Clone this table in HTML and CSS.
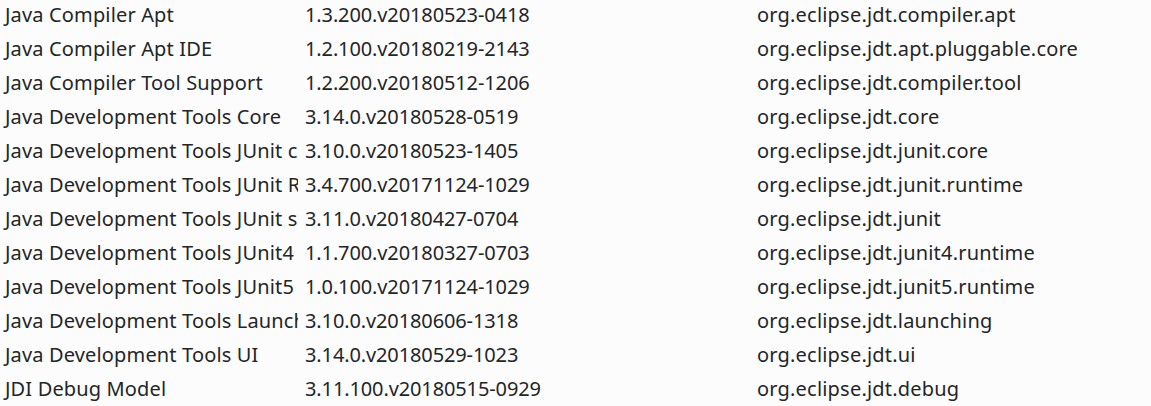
FILE: index.html
```html
<!DOCTYPE html>
<html>
<head>
<meta charset="utf-8">
<link rel="stylesheet" href="styles.css">
</head>
<body>
<div class="list">
  <div class="row"><div class="c name">Java Compiler Apt</div><div class="c ver">1.3.200.v20180523-0418</div><div class="c id">org.eclipse.jdt.compiler.apt</div></div>
  <div class="row"><div class="c name">Java Compiler Apt IDE</div><div class="c ver">1.2.100.v20180219-2143</div><div class="c id">org.eclipse.jdt.apt.pluggable.core</div></div>
  <div class="row"><div class="c name">Java Compiler Tool Support</div><div class="c ver">1.2.200.v20180512-1206</div><div class="c id">org.eclipse.jdt.compiler.tool</div></div>
  <div class="row"><div class="c name">Java Development Tools Core</div><div class="c ver">3.14.0.v20180528-0519</div><div class="c id">org.eclipse.jdt.core</div></div>
  <div class="row"><div class="c name">Java Development Tools JUnit core</div><div class="c ver">3.10.0.v20180523-1405</div><div class="c id">org.eclipse.jdt.junit.core</div></div>
  <div class="row"><div class="c name">Java Development Tools JUnit Runtime</div><div class="c ver">3.4.700.v20171124-1029</div><div class="c id">org.eclipse.jdt.junit.runtime</div></div>
  <div class="row"><div class="c name">Java Development Tools JUnit support</div><div class="c ver">3.11.0.v20180427-0704</div><div class="c id">org.eclipse.jdt.junit</div></div>
  <div class="row"><div class="c name">Java Development Tools JUnit4 runtime</div><div class="c ver">1.1.700.v20180327-0703</div><div class="c id">org.eclipse.jdt.junit4.runtime</div></div>
  <div class="row"><div class="c name">Java Development Tools JUnit5 runtime</div><div class="c ver">1.0.100.v20171124-1029</div><div class="c id">org.eclipse.jdt.junit5.runtime</div></div>
  <div class="row"><div class="c name">Java Development Tools Launching</div><div class="c ver">3.10.0.v20180606-1318</div><div class="c id">org.eclipse.jdt.launching</div></div>
  <div class="row"><div class="c name">Java Development Tools UI</div><div class="c ver">3.14.0.v20180529-1023</div><div class="c id">org.eclipse.jdt.ui</div></div>
  <div class="row"><div class="c name">JDI Debug Model</div><div class="c ver">3.11.100.v20180515-0929</div><div class="c id">org.eclipse.jdt.debug</div></div>
</div>
</body>
</html>
```

FILE: styles.css
```css
html, body {
  margin: 0;
  padding: 0;
  background: #fcfcfc;
}
body {
  font-family: "Noto Sans", sans-serif;
  font-size: 20px;
  color: #232627;
  overflow: hidden;
}
.list {
  display: flex;
  flex-direction: column;
}
.row {
  display: grid;
  grid-template-columns: 298px 450px 1fr;
  column-gap: 2px;
  height: 34px;
}
.c {
  line-height: 30px;
  padding-bottom: 4px;
  padding-left: 5px;
  white-space: nowrap;
  overflow: hidden;
}
.name {
  letter-spacing: 0.15px;
}
.ver {
  letter-spacing: -0.12px;
}
.id {
  letter-spacing: 0.2px;
}
```
